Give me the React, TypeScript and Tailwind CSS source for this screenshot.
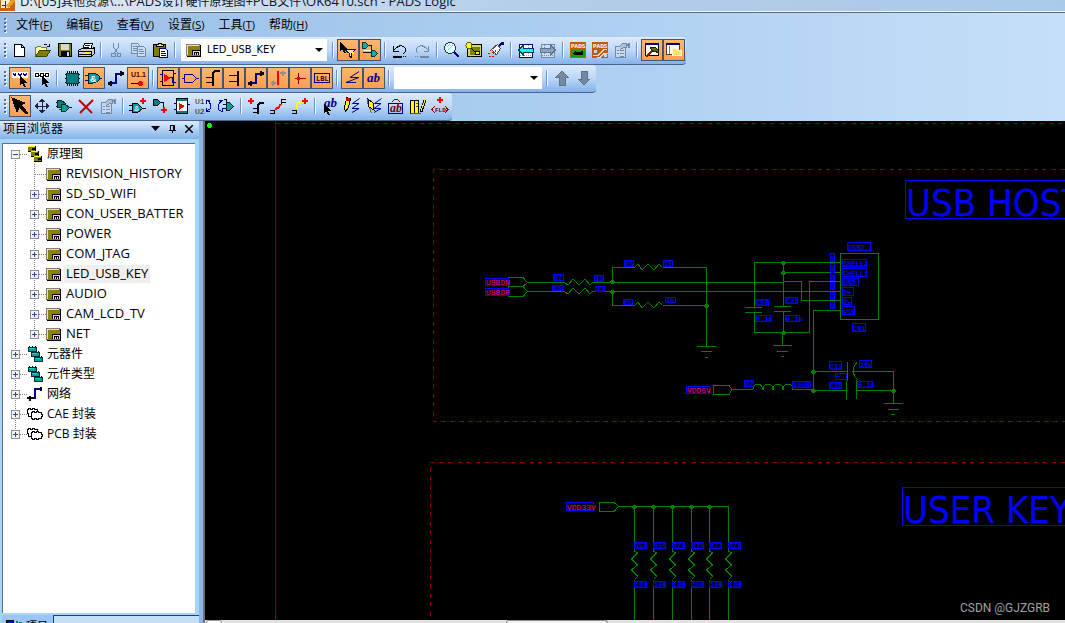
import type { ReactNode } from "react";
import clsx from "clsx";

const GATE = "M2 5h5q6 1 7 5q-1 4-7 5H2z";
const CURSOR = "M0 0v9l2-2 2 4h2l-2-4h3z";

function Plus({ x, y }: { x: number; y: number }) {
  return <path d={`M${x + 2} ${y}h2v2h2v2h-2v2h-2v-2h-2v-2h2z`} fill="#f00" />;
}

function Ab({ x, y, color = "#000090", size = 12 }: { x: number; y: number; color?: string; size?: number }) {
  return (
    <text x={x} y={y} fill={color} fontSize={size} fontWeight="bold" fontStyle="italic" fontFamily="Liberation Serif, serif">
      ab
    </text>
  );
}

const pencil = (
  <>
    <path d="M3 2h4v9l-2 5-2-5z" fill="#ff0" stroke="#000" transform="rotate(14 5 9)" />
    <path d="M4 2h4v3h-4z" fill="#c00000" />
  </>
);

const slant = <path d="M17.500 2.500L10.500 7.500H17l-7 5h7l-7 4" stroke="#000090" shapeRendering="auto" />;

const props = (
  <g stroke="#7388a3">
    <path d="M3.500 6.500h10v11h-10z" fill="#c5dbf5" />
    <path d="M5 10.500h2M5 13.500h2M8 10.500h4M8 13.500h4M8 16h4" />
    <path d="M7.500 6.500l3-3h4v4h-3l-3 2M15 4.500h3M15 5.500h3" fill="#a9c1de" />
    <path d="M16 3h2v5h-2z" fill="#7388a3" stroke="none" />
  </g>
);

const padsTile = (
  <>
    <path d="M2 2h16v16H2z" fill="#c45a00" />
    <text x="3" y="8" fontSize="6" fontWeight="bold" fill="#fff" fontFamily="Liberation Mono, monospace">
      PADS
    </text>
  </>
);

const icons: Record<string, ReactNode> = {
  new: (
    <>
      <path d="M4.500 4.500h7l3 3v9h-10z" fill="#fff" stroke="#000" />
      <path d="M11.500 4.500v3h3" stroke="#000" />
    </>
  ),
  open: (
    <>
      <path d="M3.500 16.500v-9h1l1-1h3l1 1h5v3" fill="#ffffa0" stroke="#808000" />
      <path d="M3.500 16.500l4-6h11l-4 6z" fill="#808000" stroke="#404000" />
      <path d="M11.500 5.500q2-2 4 0M15 6.500h3M17.500 4v3" stroke="#000" />
    </>
  ),
  save: (
    <>
      <path d="M4.500 3.500h13v13h-12l-1-1z" fill="#808000" stroke="#000" />
      <path d="M7 4h8v6H7z" fill="#d8d8d8" />
      <path d="M7 11h9v6H7z" fill="#000" />
      <path d="M13 12h2v4h-2z" fill="#d8d8d8" />
    </>
  ),
  print: (
    <>
      <path d="M6.500 9.500l2-6h8l-2 6z" fill="#fff" stroke="#000" />
      <path d="M9 5.500h5M8 7.500h5" stroke="#000" />
      <path d="M2.500 10.500l3-2h11l2-1v6l-3 3h-13z" fill="#d4d0c8" stroke="#000" />
      <path d="M3 11.500h12M3 14.500h12M15.500 11v5" stroke="#000" />
      <path d="M9 12h4v2H9z" fill="#ff0" />
    </>
  ),
  cut: (
    <g stroke="#7388a3">
      <path d="M7.500 3v4l4 6M12.500 3v4l-4 6" />
      <circle cx="7.500" cy="15" r="2" />
      <circle cx="13" cy="15" r="2" />
    </g>
  ),
  copy: (
    <g stroke="#7388a3" fill="#c9def7">
      <path d="M3.500 3.500h6l2 2v8h-8z" />
      <path d="M5 6.500h4M5 8.500h5M5 10.500h5" />
      <path d="M9.500 6.500h6l2 2v8h-8z" />
      <path d="M11 9.500h4M11 11.500h5M11 13.500h5" />
    </g>
  ),
  paste: (
    <>
      <path d="M3.500 4.500h12v12h-12z" fill="#808000" stroke="#000" />
      <path d="M6 6h7V4h-2V3H8v1H6z" fill="#ff0" stroke="#000" />
      <path d="M9.500 8.500h6l2 2v7h-8z" fill="#fff" stroke="#000090" />
      <path d="M11 11.500h4M11 13.500h5M11 15.500h5" stroke="#000090" />
    </>
  ),
  filter: (
    <>
      <path d={CURSOR} transform="translate(2 2)" fill="#000" />
      <path d="M6.500 9.500h11l-4 4v4l-2-1v-3z" fill="#ffe0b0" stroke="#000060" />
      <path d="M14 12h2v2h-2z" fill="#ff0" />
    </>
  ),
  gatePair: (
    <>
      <path d="M2.500 2.500h3l3 3-3 3h-3z" fill="#00b0b0" stroke="#003040" />
      <path d="M9 5.500h2.500v5M3 12.500h8" stroke="#101010" />
      <path d="M4 10.500h7" stroke="#fff" />
      <path d="M11.500 10.500h3l3 3-3 3h-3z" fill="#00b0b0" stroke="#003040" />
    </>
  ),
  undo: (
    <>
      <path d="M5.500 8.500q5-5 9-1q3 3-1 6M3.500 6v5h5M4 10l3-3" stroke="#000" />
      <path d="M3 16.500h9" stroke="#000" strokeWidth="2" />
      <path d="M13 16.500h4" stroke="#000" strokeDasharray="1 1" />
    </>
  ),
  redo: (
    <g stroke="#7388a3">
      <path d="M14.500 8.500q-5-5-9-1q-3 3 1 6M16.500 6v5h-5M16 10l-3-3" />
      <path d="M8 16.500h9" strokeWidth="2" />
      <path d="M3 16.500h4" strokeDasharray="1 1" />
    </g>
  ),
  zoom: (
    <>
      <circle cx="8" cy="8" r="5.500" fill="#e8ffff" stroke="#203040" />
      <path d="M5 7l3-3M6 10l5-5" stroke="#50e0ff" />
      <path d="M12 12l5 5" stroke="#000080" strokeWidth="2" />
    </>
  ),
  sheetZoom: (
    <>
      <path d="M3.500 4.500h14v12h-14z" fill="#d8d860" stroke="#000" />
      <path d="M6 7h10v8H6z" fill="#808000" />
      <path d="M11.500 11.500h4v3h-4z" fill="#ff0" stroke="#000" />
      <circle cx="5" cy="5.500" r="3" fill="#ff0" stroke="#606000" />
      <path d="M7 8l4 4" stroke="#000" />
    </>
  ),
  brush: (
    <>
      <path d="M5.500 9.500l6-5 3 4-4 6z" fill="#fff" stroke="#504040" />
      <path d="M13 6l3-3" stroke="#000080" strokeWidth="2" />
      <path d="M16 2h2v3h-2z" fill="#000080" />
      <path d="M4 10l6 5M2 13.500h3M3 16.500h6M7 8l4 5" stroke="#e00000" strokeDasharray="2 1" />
    </>
  ),
  prevView: (
    <>
      <path d="M3.500 4.500h13v13h-13z" fill="#fff" stroke="#000080" />
      <path d="M4 15.500h12M6.500 5v12M12.500 5v12" stroke="#90a0c0" strokeDasharray="1 1" />
      <path d="M2.500 10l5-5v3h10v4h-10v3z" fill="#00ffff" stroke="#004040" />
    </>
  ),
  nextView: (
    <>
      <path d="M3.500 4.500h13v13h-13z" fill="#c9def7" stroke="#7388a3" />
      <path d="M4 15.500h12M6.500 5v12M12.500 5v12" stroke="#7388a3" strokeDasharray="1 1" />
      <path d="M17.500 10l-5-5v3h-10v4h10v3z" fill="#8da1ba" stroke="#5d728d" />
    </>
  ),
  padsLayout: (
    <>
      {padsTile}
      <path d="M3 10h14v7H3z" fill="#10a010" />
      <path d="M6 12h1v-1h1v1h5v-1h2v4H6v-1H5v-1h1z" fill="#000" />
    </>
  ),
  padsRouter: (
    <>
      {padsTile}
      <path d="M3 15.500h5l6-6h3M7 17.500h3l4-4h4M4 11.500h3" stroke="#f6d8bc" />
      <path d="M4 10h3v3H4zM14 14h3v3h-3z" fill="#b8dcff" />
    </>
  ),
  props,
  hammer: (
    <>
      <path d="M3.500 3.500h13v12h-13z" fill="#fff" stroke="#000" />
      <path d="M3 3h14v2H3z" fill="#000080" />
      <path d="M11 10l-7 7" stroke="#802000" strokeWidth="2" />
      <path d="M8 7h5l3 3v3l-3-2-2 1z" fill="#606020" stroke="#202000" />
    </>
  ),
  folderWin: (
    <>
      <path d="M2.500 3.500h13v11h-13z" fill="#fff" stroke="#404040" />
      <path d="M2 3h14v2H2z" fill="#000080" />
      <path d="M5.500 6v8" stroke="#808080" />
      <path d="M8.500 15.500v-7h4l1 2h4v5z" fill="#ffe070" stroke="#fff8d0" />
    </>
  ),

  selAll: (
    <>
      <path d="M2 4h16v6H2z" fill="#fff" />
      <path d="M3 5l2 3 1-3M8 5l2 3 2-3M13 5l2 3 2-3" stroke="#000080" />
      <path d={CURSOR} transform="translate(10 8)" fill="#000" />
    </>
  ),
  selPart: (
    <>
      <path d="M2 4h16v6H2z" fill="#fff" />
      <path d="M3.500 5.500h3v3h-3zM8.500 5.500h3v3h-3zM13.500 5.500h3v3h-3zM6 7.500h3M11 7.500h3" stroke="#000" />
      <path d={CURSOR} transform="translate(10 8)" fill="#000" />
    </>
  ),
  chip: (
    <>
      <path d="M5.500 3v15M7.500 3v15M9.500 3v15M11.500 3v15M13.500 3v15M15.500 3v15M3 6.500h15M3 10.500h15M3 14.500h15" stroke="#000" />
      <path d="M4.500 5.500h12v10h-12z" fill="#008080" stroke="#003030" />
    </>
  ),
  gate: (
    <>
      <path d="M1 7.500h4M1 12.500h4M14 10.500h4" stroke="#000080" />
      <path d={GATE} transform="translate(2 0)" fill="#00a0a0" stroke="#002030" />
      <text x="6" y="14" fontSize="9" fontWeight="bold" fill="#fff" fontFamily="Liberation Sans, sans-serif">&amp;</text>
    </>
  ),
  net: (
    <>
      <path d="M3 15h7V6h7" stroke="#000090" strokeWidth="2" />
      <path d="M14 3h2v5h-2zM16 4h2v3h-2zM4 13h2v5H4zM2 14h2v3H2z" fill="#000" />
    </>
  ),
  pinNum: (
    <>
      <text x="3" y="9" fontSize="7" fontWeight="bold" fill="#500000" fontFamily="Liberation Sans, sans-serif">U1.1</text>
      <path d="M3 15.500h8" stroke="#000" />
      <circle cx="12.500" cy="15.500" r="2.500" fill="#f00" />
    </>
  ),
  offpage: (
    <>
      <path d="M4.500 2.500h11v15h-11z" stroke="#000" />
      <path d="M2 6.500h3M2 13.500h3M11 9.500h3v5h4M15 5.500h3" stroke="#000080" />
      <path d="M6 6l7 4-7 4z" fill="#f00" />
    </>
  ),
  port: <path d="M4.500 6.500h8l4 4-4 4h-8zM2 10.500h2M17 10.500h2" stroke="#000090" />,
  busIn: (
    <>
      <path d="M4 9.500h6M4 14.500h6" stroke="#000" />
      <path d="M11 18V5l2-2h5" stroke="#000" strokeWidth="2" />
    </>
  ),
  busBar: (
    <>
      <path d="M5 7.500h8M5 13.500h8" stroke="#000" />
      <path d="M14 3v15" stroke="#000" strokeWidth="2" />
    </>
  ),
  netGray: (
    <>
      <path d="M3 15h5M12 5h6" stroke="#909090" strokeWidth="2" />
      <path d="M4 13h2v5H4zM14 3h2v5h-2z" fill="#909090" />
      <path d="M10 3v14" stroke="#f00" strokeWidth="2" />
    </>
  ),
  junction: (
    <>
      <path d="M8.500 5v11" stroke="#800000" />
      <path d="M5 10.500h11" stroke="#a00000" />
      <circle cx="8.500" cy="10.500" r="2" fill="#f00" />
    </>
  ),
  lbl: (
    <>
      <path d="M2.500 5.500h15v9h-15z" stroke="#000090" />
      <text x="4" y="13" fontSize="7" fontWeight="bold" fill="#400000" fontFamily="Liberation Mono, monospace">LBL</text>
    </>
  ),
  slant: <path d="M17 3.500L8 9.500H17L4 14.500H14" stroke="#000090" shapeRendering="auto" />,
  ab: <Ab x={3} y={14} size={13} />,
  up: <path d="M10 3l6 6h-3v8H7V9H4z" fill="#76899f" stroke="#5d728d" />,
  down: <path d="M10 17l6-6h-3V3H7v8H4z" fill="#76899f" stroke="#5d728d" />,

  arrow: <path d="M2 2l13 5-4 2 7 8-2 1-7-7-2 5z" fill="#000" stroke="#000" />,
  move: (
    <>
      <path d="M10 3v14M3 10h14" stroke="#202040" />
      <path d="M10 2l3 4H7zM10 18l3-4H7zM2 10l4-3v6zM18 10l-4-3v6z" fill="#202040" />
    </>
  ),
  gates2: (
    <>
      <path d="M3.500 4.500h4l4 3-4 4h-4zM2 6h2M2 10h2" fill="#008080" stroke="#002020" />
      <path d="M7.500 8.500h4l4 3-4 4h-4zM15 11.500h3M5 13h3" fill="#00a0a0" stroke="#002020" />
    </>
  ),
  cross: <path d="M3 4l13 13M17 4L4 17" stroke="#c00000" strokeWidth="2" shapeRendering="auto" />,
  addGate: (
    <>
      <path d="M1 9.500h4M1 14.500h4M13 12.500h5" stroke="#000" />
      <path d="M4.500 7.500h5l5 5-5 4h-5z" fill="#00a0a0" stroke="#000" />
      <text x="6" y="15" fontSize="8" fill="#fff" fontFamily="Liberation Sans, sans-serif">&amp;</text>
      <Plus x={12} y={2} />
    </>
  ),
  addWire: (
    <>
      <path d="M3.500 3.500h4l3 3-3 3h-4z" fill="#008080" stroke="#000" />
      <path d="M10 6.500h3.500v4" stroke="#000" />
      <Plus x={11} y={11} />
    </>
  ),
  hier: (
    <>
      <path d="M4.500 2.500h11v15h-11z" fill="#fff" stroke="#000" />
      <path d="M5 4h10M5 16h10" stroke="#008080" strokeWidth="2" />
      <path d="M2 7.500h3M2 13.500h3M15 8.500h3" stroke="#000080" />
      <path d="M7 7l6 3-6 4z" fill="#f00" />
    </>
  ),
  swapRef: (
    <>
      <g fontSize="8" fill="#202020" fontFamily="Liberation Mono, monospace">
        <text x="1" y="8">U1</text>
        <text x="1" y="18">U2</text>
      </g>
      <path d="M13 4q5 3 3 9l-4 2M12 4h4M12.500 4v4M12.500 16v-4M12 15.500h4" stroke="#000090" />
    </>
  ),
  swapGate: (
    <>
      <path d="M7 4q-6 3-4 10l4 2M6 4H3M6.500 16v-4" stroke="#000090" />
      <path d="M10.500 6.500h3l4 4-4 4h-3zM7 8.500h3M7 12.500h3" fill="#00a0a0" stroke="#002020" />
      <path d="M8 3.500h2.500V7" stroke="#000" />
    </>
  ),
  addBus: (
    <>
      <Plus x={2} y={2} />
      <path d="M7 12.500h4M7 16.500h4" stroke="#000" />
      <path d="M12 18V9l2-2h4" stroke="#000" strokeWidth="2" />
    </>
  ),
  splitBus: (
    <>
      <path d="M2 14.500h4M2 17.500h4M6.500 18v-4M13.500 8V3.500H18M14 6.500h4" stroke="#000" />
      <path d="M7 13l3-1 3-4" stroke="#f00" strokeWidth="2" />
    </>
  ),
  extendBus: (
    <>
      <path d="M2 14.500h4M2 17.500h4M6.500 18v-4" stroke="#000" />
      <path d="M7 13V8l3-2h3" stroke="#ff0" strokeWidth="2" />
      <Plus x={12} y={2} />
    </>
  ),
  abCursor: (
    <>
      <Ab x={4} y={11} size={13} />
      <path d={CURSOR} transform="translate(4 8)" fill="#000" />
    </>
  ),
  pencilDraw: (
    <>
      {slant}
      {pencil}
    </>
  ),
  pencilEdit: (
    <>
      {slant}
      <path d="M4 3l5 4 1 7-5-3z" fill="#ff0" stroke="#000" />
      <path d="M3.500 3v5M5.500 12l2 5" stroke="#806000" />
    </>
  ),
  abBox: (
    <>
      <path d="M6 6q4-6 8 0" stroke="#800000" />
      <path d="M2.500 7.500h14v10h-14z" stroke="#000090" />
      <Ab x={4} y={16} color="#800000" size={12} />
    </>
  ),
  library: (
    <>
      <path d="M2.500 4.500h4v13h-4zM6.500 4.500h4v13h-4z" fill="#ff0" stroke="#000" />
      <path d="M13 16l4-12" stroke="#000" strokeWidth="3" />
      <path d="M13 15l4-11" stroke="#ff0" />
      <path d="M3 17.500h10M8 7.500h2M8 10.500h2" stroke="#606000" />
    </>
  ),
  field: (
    <>
      <Plus x={7} y={1} />
      <path d="M5 10l-3 3.500L5 17M15 10l3 3.500L15 17" stroke="#800000" />
      <text x="5" y="16" fontSize="6" fontWeight="bold" fill="#800000" fontFamily="Liberation Mono, monospace">FLD</text>
    </>
  ),
};

// "|" is a separator, a trailing "*" marks a pressed button
const standardLeft = "new open save print | cut copy paste |".split(" ");
const standardRight =
  "| filter* gatePair* | undo redo | zoom sheetZoom brush | prevView nextView | padsLayout padsRouter props | hammer* folderWin*".split(" ");
const filterLeft =
  "selAll* selPart | chip gate* net pinNum* | offpage* port* busIn* busBar* net* netGray* junction* lbl* | slant* ab* |".split(" ");
const filterRight = "| up down".split(" ");
const editTools =
  "arrow* move gates2 cross props | addGate addWire hier swapRef swapGate | addBus splitBus extendBus | abCursor pencilDraw pencilEdit abBox library field".split(" ");

function Grip() {
  return (
    <span className="flex w-[9px] shrink-0 flex-col items-center justify-center gap-[2px]">
      {[0, 1, 2, 3].map((i) => (
        <span key={i} className="h-[2px] w-[2px] bg-[#4a6f9f] shadow-[1px_1px_0_#fff]" />
      ))}
    </span>
  );
}

function Tools({ items }: { items: string[] }) {
  return (
    <>
      {items.map((item, i) => {
        if (item === "|") {
          return (
            <span key={i} className="flex w-2 shrink-0 items-center justify-center">
              <span className="h-4 w-[2px] border-l border-[#6a93c8] bg-white" />
            </span>
          );
        }
        const name = item.replace("*", "");
        const pressed = item.endsWith("*");
        return (
          <button
            key={i}
            type="button"
            aria-label={name}
            aria-pressed={pressed}
            className={clsx(
              "flex h-[22px] w-[22px] shrink-0 items-center justify-center",
              pressed && "bg-linear-to-b from-[#fcb86f] to-[#ff9c50] outline outline-[#46556e] -outline-offset-1",
            )}
          >
            <svg viewBox="0 0 20 20" className="h-5 w-5 shrink-0" fill="none" shapeRendering="crispEdges">
              {icons[name]}
            </svg>
          </button>
        );
      })}
    </>
  );
}

function Toolbar({ label, children }: { label: string; children: ReactNode }) {
  return (
    <div
      role="toolbar"
      aria-label={label}
      className="flex h-7 w-fit rounded-r-sm border-b border-[#47658f] bg-linear-to-b from-[#dcebfd] via-[#bcd7f7] to-[#84b2ea] pt-[2px] pr-px pb-[3px]"
    >
      <Grip />
      {children}
    </div>
  );
}

function DropArrow() {
  return (
    <svg viewBox="0 0 8 4" className="mr-1 h-1 w-2 shrink-0">
      <path d="M0 0h8L4 4z" fill="#000" />
    </svg>
  );
}

function SheetIcon() {
  return (
    <svg viewBox="0 0 15 13" className="h-[13px] w-[15px] shrink-0" fill="none" shapeRendering="crispEdges">
      <path d="M0 0h14v12H0z" fill="#808080" />
      <path d="M1 12h14V1h-1v11z" fill="#000" />
      <path d="M1 1h13v11H1z" fill="#848400" />
      <path d="M1.500 11V1.500H13" stroke="#ff0" />
      <path d="M6 6h8v1H7v4H6z" fill="#000" />
      <path d="M7 7h7v4H7z" fill="#ff0" />
      <path d="M8 8h5v3H8z" fill="#000" />
      <path d="M9 9h1v2H9zM11 9h1v2h-1z" fill="#ff0" />
      <path d="M14 1h1v12H1v-1h13z" fill="#000" />
    </svg>
  );
}

function Title() {
  return (
    <header className="flex h-3 items-end overflow-hidden border-b border-[#f2f8ff] bg-linear-to-r from-[#dfeaf6] via-[#b4cde8] to-[#a9cae9]">
      <svg viewBox="0 0 15 11" className="h-[11px] w-[15px] shrink-0" shapeRendering="crispEdges" fill="none">
        <path d="M0 0h15v11H0z" fill="#c86414" />
        <path d="M1 0h9v8H1z" fill="#f4e8d8" />
        <path d="M2 5h7M5 1v7" stroke="#203060" />
        <path d="M14 0L7 7" stroke="#f0a020" strokeWidth="3" />
      </svg>
      <h1 className="ml-[5px] text-[13px] leading-5 whitespace-nowrap text-[#10141c]">
        D:\[05]<span className="text-xs leading-4">其他资源</span>\...\PADS<span className="text-xs leading-4">设计硬件原理图</span>+PCB
        <span className="text-xs leading-4">文件</span>\OK6410.sch - PADS Logic
      </h1>
    </header>
  );
}

const menus = [
  ["文件", "F"],
  ["编辑", "E"],
  ["查看", "V"],
  ["设置", "S"],
  ["工具", "T"],
  ["帮助", "H"],
];

function MenuBar() {
  return (
    <nav className="flex h-6 items-stretch">
      <Grip />
      <div className="flex items-center gap-[14px] pl-[7px]">
        {menus.map(([name, key]) => (
          <button key={key} type="button" className="text-xs whitespace-nowrap">
            {name}
            <span className="text-[11px]">
              (<u>{key}</u>)
            </span>
          </button>
        ))}
      </div>
    </nav>
  );
}

type Kind = "root" | "sheet" | "parts" | "net" | "package";

function SmallIcon({ kind }: { kind: Kind }) {
  if (kind === "sheet") return <SheetIcon />;
  return (
    <svg viewBox="0 0 16 16" className="h-4 w-4 shrink-0" fill="none" shapeRendering="crispEdges">
      {kind === "root" &&
        [0, 1, 2].map((i) => (
          <g key={i} transform={`translate(${i * 3 + 1} ${i * 5})`}>
            <path d="M0 0h8v6H0z" fill="#000" />
            <path d="M0 0h7v5H0z" fill="#808000" />
            <path d="M0 .500h7" stroke="#ff0" />
            <path d="M4 2h3v2H4z" fill="#000" />
          </g>
        ))}
      {kind === "parts" &&
        [0, 1, 2].map((i) => (
          <g key={i} transform={`translate(${i * 3 + 1} ${i * 5})`}>
            <path d="M0 1.500h8v4h-8z" fill="#00a0a0" stroke="#003030" />
            <path d="M1.500 0v1M4.500 0v1M7.500 0v1" stroke="#000" />
            <path d="M1 2.500h5" stroke="#00e0e0" />
          </g>
        ))}
      {kind === "net" && (
        <>
          <path d="M2 12h6V3h7" stroke="#000090" strokeWidth="2" />
          <path d="M13 1h2v4h-2zM2 10h2v5H2zM0 11h6v2H0z" fill="#000" />
        </>
      )}
      {kind === "package" && (
        <g stroke="#000" fill="#fff">
          <path d="M.500 3.500h1v-1h2v1h2v-1h2v1h3v7h-2v1h-2v-1H1.500v-3H.500z" />
          <path d="M4.500 6.500h1v-1h2v1h2v-1h2v1h3v2h1v2h-1v2h-3v1h-2v-1h-2v1h-2v-1H4.500z" />
        </g>
      )}
    </svg>
  );
}

interface TreeRowProps {
  label: string;
  kind: Kind;
  child?: boolean;
  leaf?: boolean;
  open?: boolean;
  last?: boolean;
  selected?: boolean;
}

function TreeRow({ label, kind, child, leaf, open, last, selected }: TreeRowProps) {
  const x = child ? 30 : 11;
  return (
    <button type="button" className="flex h-5 w-full items-center text-left">
      <svg
        viewBox={child ? "0 0 43 20" : "0 0 24 20"}
        className={clsx("h-5 shrink-0", child ? "w-[43px]" : "w-6")}
        fill="none"
        shapeRendering="crispEdges"
      >
        <g transform="translate(-3 0)">
          <g stroke="#808080" strokeDasharray="1 1">
            {child && <path d="M15.500 0v20" />}
            <path d={`M${x + 4}.500 ${open ? 10 : 0}V${last ? 10 : 20}M${x + 5} 10.500h11`} />
          </g>
          {!leaf && (
            <>
              <path d={`M${x}.500 6.500h8v8h-8z`} fill="#f4f4f4" stroke="#8e8f8f" />
              <path d={`M${x + 2} 10.500h5${open ? "" : `M${x + 4}.500 8v5`}`} stroke="#2b4ea0" />
            </>
          )}
        </g>
      </svg>
      <SmallIcon kind={kind} />
      <span
        className={clsx(
          "px-[2px] whitespace-nowrap",
          child ? "ml-[3px] pb-[2px] text-[13px] leading-4" : "ml-[2px] text-xs leading-[18px]",
          selected && "bg-[#efefef]",
        )}
      >
        {label}
      </span>
    </button>
  );
}

const sheets = ["REVISION_HISTORY", "SD_SD_WIFI", "CON_USER_BATTER", "POWER", "COM_JTAG", "LED_USB_KEY", "AUDIO", "CAM_LCD_TV", "NET"];

function ProjectExplorer() {
  return (
    <aside className="flex w-[203px] shrink-0 flex-col border-r-4 border-[#8db5e8] bg-[#a5d5f8]">
      <div className="flex h-[18px] shrink-0 items-center gap-[9px] bg-linear-to-b from-[#dcebfd] to-[#84b2ea] pr-[6px] pb-[3px] pl-[3px]">
        <h2 className="flex-1 text-xs whitespace-nowrap">项目浏览器</h2>
        <button type="button" aria-label="menu">
          <svg viewBox="0 0 9 5" className="h-[5px] w-[9px]"><path d="M0 0h9L4.500 5z" /></svg>
        </button>
        <button type="button" aria-label="pin">
          <svg viewBox="0 0 7 8" className="h-2 w-[7px]" fill="none" stroke="#000" shapeRendering="crispEdges">
            <path d="M1.500 5V.500h4V5M4.500 0v5M0 5.500h7M3.500 5v3" />
          </svg>
        </button>
        <button type="button" aria-label="close">
          <svg viewBox="0 0 8 8" className="h-2 w-2" stroke="#000" strokeWidth="1.500"><path d="M0 0l8 8M8 0L0 8" /></svg>
        </button>
      </div>
      <div className="mt-1 mr-1 ml-[2px] min-h-0 flex-1 overflow-hidden border-t border-l border-[#6d6d6d] bg-white">
        <ul>
          <li><TreeRow label="原理图" kind="root" open /></li>
          <li>
            <ul>
              {sheets.map((name, i) => (
                <li key={name}>
                  <TreeRow label={name} kind="sheet" child leaf={i === 0} last={i === sheets.length - 1} selected={name === "LED_USB_KEY"} />
                </li>
              ))}
            </ul>
          </li>
          <li><TreeRow label="元器件" kind="parts" /></li>
          <li><TreeRow label="元件类型" kind="parts" /></li>
          <li><TreeRow label="网络" kind="net" /></li>
          <li><TreeRow label="CAE 封装" kind="package" /></li>
          <li><TreeRow label="PCB 封装" kind="package" last /></li>
        </ul>
      </div>
      <div className="mt-[2px] flex h-2 shrink-0 overflow-hidden">
        <button type="button" className="ml-[2px] flex w-[51px] shrink-0 items-start gap-1 bg-[#9cc5f2] pt-[5px] pl-1 text-[11px] leading-3">
          <svg viewBox="0 0 16 10" className="h-[10px] w-4 shrink-0" shapeRendering="crispEdges">
            <path d="M0 0h8v6H0z" />
            <path d="M1 1h6v4H1z" fill="#00f" />
            <path d="M10 1h2v4h-2zM13 2h3v3h-3z" fill="#008060" />
          </svg>
          <span className="whitespace-nowrap">项目</span>
        </button>
        <span className="flex-1 border-t border-l border-[#0f4292] bg-[#c6dff8]" />
      </div>
    </aside>
  );
}

// x, y, width, height, text
type Tag = [number, number, number, number, string];

const tags: Tag[] = [
  [553, 274, 11, 7, "R7"],
  [594, 275, 10, 7, "33"],
  [552, 285, 11, 6, "R8"],
  [595, 286, 10, 6, "33"],
  [624, 260, 10, 7, "R5"],
  [663, 260, 10, 7, "15"],
  [623, 299, 10, 6, "R6"],
  [665, 297, 11, 6, "15"],
  [847, 242, 24, 9, "USB2.1"],
  [842, 259, 25, 8, "SHELL2"],
  [842, 268, 25, 9, "SHELL1"],
  [842, 278, 17, 8, "GND"],
  [842, 287, 12, 9, "D+"],
  [842, 297, 10, 8, "D-"],
  [842, 306, 13, 9, "VCC"],
  [852, 323, 14, 9, "CN1"],
  [830, 253, 5, 9, "6"],
  [830, 263, 5, 8, "5"],
  [830, 272, 5, 9, "4"],
  [830, 282, 5, 8, "3"],
  [830, 292, 5, 8, "2"],
  [830, 301, 5, 8, "1"],
  [755, 299, 14, 7, "C58"],
  [755, 315, 16, 7, "0.1u"],
  [785, 297, 13, 7, "C33"],
  [785, 315, 15, 7, "0.1u"],
  [744, 380, 10, 7, "B2"],
  [792, 381, 19, 7, "100R"],
  [829, 361, 13, 9, "C12"],
  [835, 373, 12, 7, "+"],
  [829, 382, 13, 7, "C28"],
  [859, 360, 13, 8, "10u"],
  [857, 381, 16, 7, "0.1u"],
];

const ports: Tag[] = [
  [485, 278, 24, 8, "USBDN"],
  [485, 288, 24, 8, "USBDP"],
  [686, 386, 24, 8, "VDD5V"],
  [566, 502, 28, 9, "VDD33V"],
];

const pullups: [number, string][] = [
  [634, "R58"],
  [653, "R59"],
  [672, "R74"],
  [691, "R75"],
  [709, "R77"],
  [728, "R78"],
];

const dots = [
  [612, 281], [612, 291], [706, 305], [783, 262], [783, 272], [783, 332], [813, 371], [813, 390], [893, 390],
  [634, 506], [653, 506], [672, 506], [691, 506], [709, 506],
];

const wires = [
  // USB data lines
  "M508.500 277.500H523l4.500 5-4.500 4H508.500zM508.500 286.500H523l4.500 5-4.500 5H508.500z",
  "M527 282.500H565M593 282.500H783.500V281.500H801.500V300.500H840",
  "M527 291.500H565M593 291.500H840",
  "M612.500 282V267.500H635M663 267.500H706.500V346M612.500 291V305.500H635M663 305.500H706.500",
  "M697 346.500H716M701 351.500H712M705 357.500H708",
  // connector and decoupling
  "M840 262.500H754.500V307M745 307.500H762M745 312.500H762M754.500 312V332.500H809.500V281.500H840",
  "M783.500 262V306M774 306.500H791M774 311.500H791M783.500 311V332M782.500 332V345M773 345.500H792M777 351.500H788M781 356.500H784",
  "M783 272.500H840M840 310.500H813.500V390",
  "M840.500 253.500H878.500V319.500H840.500z",
  // 5V supply
  "M713.500 385.500H729l3 4-3 5H713.500zM732 389.500H753M792 389.500H813",
  "M813 371.500H847M847.500 362V381M852 371.500H893.500V403M813 390.500H846M846.500 381V400M856.500 380V399M856 390.500H893",
  "M884 403.500H903M888 409.500H899M891 414.500H895",
  // 3.3V supply
  "M599.500 502.500H614l4.500 4-4.500 5H599.500zM618 506.500H728.500",
];

const zigzags = [
  "M565 283l3 2 5-6 6 6 6-6 5 6 3-3",
  "M565 292l3 2 5-6 6 6 6-6 5 6 3-3",
  "M635 267l3-3 4 6 6-6 6 6 5-6 3 3",
  "M635 305l3-3 4 6 6-6 6 6 5-6 3 3",
  "M753 389q1-5 5-5t5 6q0-6 5-6t5 6q0-6 5-6t5 6q0-6 5-6t5 5",
  "M857 362l-3 5-1 5 2 5 3 3",
];

function TagBox({ tag: [x, y, w, h, text], port }: { tag: Tag; port?: boolean }) {
  return (
    <>
      <rect x={x + 0.5} y={y + 0.5} width={w - 1} height={h - 1} fill="none" stroke="#0000ff" />
      <text x={x + 1} y={y + h - 1} fontSize={port ? 8 : 7} fill={port ? "#f000a0" : "#0000ff"} fontWeight={port ? "normal" : "bold"}>
        {text}
      </text>
    </>
  );
}

function Schematic() {
  return (
    <svg className="h-full w-full bg-black" aria-label="schematic" shapeRendering="crispEdges">
      <g transform="translate(-205 -121)" fill="none">
        <g stroke="#800000">
          <path d="M275.500 121V2000" />
          <path d="M275 123.500H3000M3000 169.500H433.500V421.500H3000" strokeDasharray="5 4" />
          <path d="M3000 462.500H430.500V2000" strokeDasharray="5 4" />
        </g>
        <circle cx="209.500" cy="125.500" r="2.500" fill="#00ff00" />
        <g stroke="#008000">
          {wires.map((d) => (
            <path key={d} d={d} />
          ))}
          {zigzags.map((d) => (
            <path key={d} d={d} />
          ))}
          {pullups.map(([x]) => (
            <path key={x} d={`M${x}.500 506V551l3 2-6 6 6 6-6 5 6 6-2 3M${x}.500 580V2000`} />
          ))}
        </g>
        {dots.map(([x, y]) => (
          <path key={`${x}-${y}`} d={`M${x - 1} ${y - 1}h3v1h1v2h-1v1h-3v-1h-1v-2h1z`} fill="#008000" />
        ))}
        <g fontFamily="Liberation Mono, monospace">
          {tags.map((tag, i) => (
            <TagBox key={i} tag={tag} />
          ))}
          {pullups.map(([x, name]) => (
            <g key={x}>
              <TagBox tag={[x, 542, 13, 7, name]} />
              <TagBox tag={[x, 581, 13, 7, "10K"]} />
            </g>
          ))}
          {ports.map((tag) => (
            <TagBox key={tag[4]} tag={tag} port />
          ))}
        </g>
        <path d="M3000 180.500H905.500V218.500H3000M3000 487.500H902.500V525.500H3000" stroke="#0000ff" />
        <g fontFamily="DejaVu Sans Condensed, DejaVu Sans, sans-serif" fontSize="38" fill="#0000ff">
          <text x="906" y="216">USB HOST</text>
          <text x="903" y="523">USER KEY</text>
        </g>
      </g>
    </svg>
  );
}

export default function App() {
  return (
    <div className="flex h-screen flex-col overflow-hidden bg-linear-to-r from-[#9bbee7] via-[#abcdf0] to-[#c5dff8] font-['Open_Sans','Noto_Sans_CJK_SC',sans-serif] text-black">
      <Title />
      <div className="border-t border-[#5b6b80]">
        <MenuBar />
        <Toolbar label="Standard">
          <Tools items={standardLeft} />
          <label className="mx-[2px] flex h-[22px] w-[146px] items-center bg-white pl-[5px]">
            <SheetIcon />
            <select aria-label="Sheet" className="min-w-0 flex-1 appearance-none pl-[6px] font-['DejaVu_Sans_Condensed','DejaVu_Sans',sans-serif] text-[11px] outline-none">
              <option>LED_USB_KEY</option>
            </select>
            <DropArrow />
          </label>
          <Tools items={standardRight} />
        </Toolbar>
        <Toolbar label="Selection filter">
          <Tools items={filterLeft} />
          <label className="mx-px flex h-[22px] w-[148px] items-center bg-white">
            <select aria-label="Find" className="min-w-0 flex-1 appearance-none text-[11px] outline-none">
              <option></option>
            </select>
            <DropArrow />
          </label>
          <Tools items={filterRight} />
        </Toolbar>
        <Toolbar label="Schematic editing">
          <Tools items={editTools} />
        </Toolbar>
      </div>
      <div className="flex min-h-0 flex-1">
        <ProjectExplorer />
        <main className="relative flex min-w-0 flex-1 flex-col border-l-2 border-[#6c6f75]">
          <div className="min-h-0 flex-1 overflow-hidden">
            <Schematic />
          </div>
          <div className="flex h-[3px] shrink-0 bg-[#e2e2e2]">
            <span className="ml-px w-4 rounded-t-sm border border-b-0 border-[#a0a0a0] bg-white" />
            <span className="ml-[33%] w-[102px] rounded-t-sm border border-b-0 border-[#8c8c8c] bg-[#f2f2f2]" />
          </div>
          <span className="absolute right-[15px] bottom-2 font-[Roboto,sans-serif] text-xs leading-[14px] text-[#a0a0a0]">CSDN @GJZGRB</span>
        </main>
      </div>
    </div>
  );
}
